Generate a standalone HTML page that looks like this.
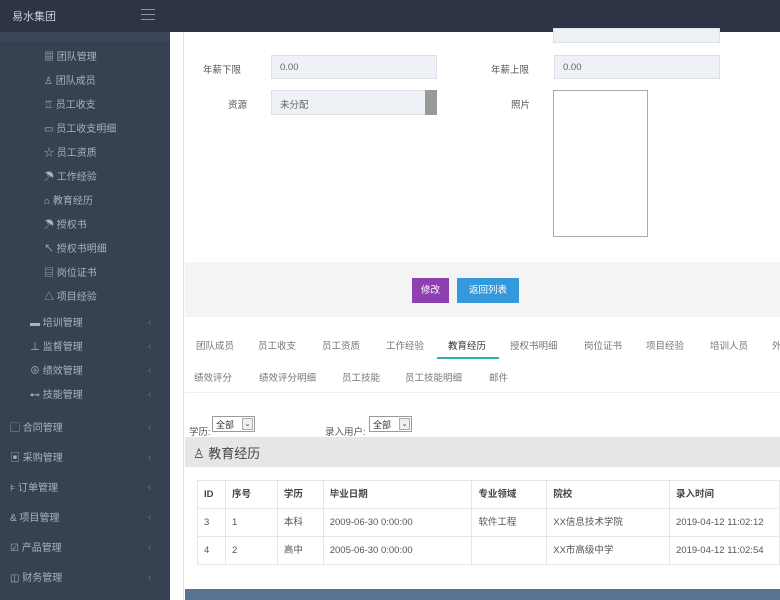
<!DOCTYPE html>
<html><head><meta charset="utf-8"><style>
*{margin:0;padding:0;box-sizing:border-box}
body{width:780px;height:600px;overflow:hidden;background:#fff;font-family:"Liberation Sans","Noto Sans CJK SC",sans-serif;font-size:10px;color:#555;position:relative}
.top{position:absolute;left:0;top:0;width:780px;height:32px;background:#2c3446}
.logo{position:absolute;left:12px;top:8px;color:#c8cdd6;font-size:11px}
.burger{position:absolute;left:141px;top:9px;width:14px}
.burger i{display:block;height:1px;background:#8a93a3;margin-bottom:4px}
.side{position:absolute;left:0;top:32px;width:170px;height:568px;background:#364152}
.side div{position:absolute;color:#a9b1bf;font-size:10px;white-space:nowrap}
.side .ar{left:148px;color:#6f7888;margin-top:3px}
.strip{position:absolute;left:170px;top:32px;width:14px;height:568px;background:#fff;border-right:1px solid #dfe3e8}
.lbl{position:absolute;font-size:9.5px;color:#555}
.inp{position:absolute;background:#eef1f5;border:1px solid #dde1e6;font-size:9.5px;color:#666;padding:6px 8px}
.btnbar{position:absolute;left:185px;top:262px;width:595px;height:55px;background:#f4f4f4}
.btn{position:absolute;top:16px;height:25px;color:#fff;font-size:9.5px;line-height:25px;text-align:center}
.tab{position:absolute;font-size:9.5px;color:#777;white-space:nowrap}
.sel{position:absolute;border:1px solid #999;background:#fff;height:16px;font-size:9px;padding:1px 3px;color:#333}
.sel span{position:absolute;right:1px;top:1px;width:11px;height:12px;border:1px solid #aaa;background:#eee;font-size:7px;text-align:center;line-height:11px}
table{position:absolute;left:197px;top:480px;border-collapse:collapse;font-size:9.5px;color:#555}
td{border:1px solid #e6e6e6;height:28px;line-height:26px;padding:0 6px;vertical-align:middle;white-space:nowrap}
tr:first-child td{font-weight:bold;color:#444}
</style></head><body>
<div class="top"><div class="logo">易水集团</div><div class="burger"><i></i><i></i><i></i></div></div>
<div class="side">
<div style="left:0;top:0;width:170px;height:10px;background:#3b4659"></div>
<div style="left:44px;top:16px">▦ 团队管理</div>
<div style="left:44px;top:40px">♙ 团队成员</div>
<div style="left:44px;top:64px">♖ 员工收支</div>
<div style="left:44px;top:88px">▭ 员工收支明细</div>
<div style="left:44px;top:112px">☆ 员工资质</div>
<div style="left:44px;top:136px">☂ 工作经验</div>
<div style="left:44px;top:160px">⌂ 教育经历</div>
<div style="left:44px;top:184px">☂ 授权书</div>
<div style="left:44px;top:208px">↖ 授权书明细</div>
<div style="left:44px;top:232px">▤ 岗位证书</div>
<div style="left:44px;top:256px">△ 项目经验</div>
<div style="left:30px;top:282px">▬ 培训管理</div><div class="ar" style="top:282px">‹</div>
<div style="left:30px;top:306px">⊥ 监督管理</div><div class="ar" style="top:306px">‹</div>
<div style="left:30px;top:330px">⊕ 绩效管理</div><div class="ar" style="top:330px">‹</div>
<div style="left:30px;top:354px">⊷ 技能管理</div><div class="ar" style="top:354px">‹</div>
<div style="left:10px;top:387px">▢ 合同管理</div><div class="ar" style="top:387px">‹</div>
<div style="left:10px;top:417px">▣ 采购管理</div><div class="ar" style="top:417px">‹</div>
<div style="left:10px;top:447px">⊧ 订单管理</div><div class="ar" style="top:447px">‹</div>
<div style="left:10px;top:477px">&amp; 项目管理</div><div class="ar" style="top:477px">‹</div>
<div style="left:10px;top:507px">☑ 产品管理</div><div class="ar" style="top:507px">‹</div>
<div style="left:10px;top:537px">◫ 财务管理</div><div class="ar" style="top:537px">‹</div>
</div>
<div class="strip"></div>
<div class="inp" style="left:553px;top:28px;width:167px;height:15px;padding:0"></div>
<div class="lbl" style="left:203px;top:62px">年薪下限</div>
<div class="inp" style="left:271px;top:55px;width:166px;height:24px">0.00</div>
<div class="lbl" style="left:491px;top:62px">年薪上限</div>
<div class="inp" style="left:554px;top:55px;width:166px;height:24px">0.00</div>
<div class="lbl" style="left:228px;top:97px">资源</div>
<div class="inp" style="left:271px;top:90px;width:166px;height:25px">未分配</div>
<div style="position:absolute;left:425px;top:90px;width:12px;height:25px;background:#999"></div>
<div class="lbl" style="left:511px;top:97px">照片</div>
<div style="position:absolute;left:553px;top:90px;width:95px;height:147px;border:1px solid #aaa;background:#fff"></div>
<div class="btnbar">
<div class="btn" style="left:227px;width:37px;background:#8e3fb0">修改</div>
<div class="btn" style="left:272px;width:62px;background:#3498db">返回列表</div>
</div>
<div class="tab" style="left:196px;top:338px">团队成员</div>
<div class="tab" style="left:258px;top:338px">员工收支</div>
<div class="tab" style="left:322px;top:338px">员工资质</div>
<div class="tab" style="left:386px;top:338px">工作经验</div>
<div class="tab" style="left:448px;top:338px;color:#333">教育经历</div>
<div style="position:absolute;left:437px;top:357px;width:62px;height:2px;background:#2ab0b0"></div>
<div class="tab" style="left:510px;top:338px">授权书明细</div>
<div class="tab" style="left:584px;top:338px">岗位证书</div>
<div class="tab" style="left:646px;top:338px">项目经验</div>
<div class="tab" style="left:710px;top:338px">培训人员</div>
<div class="tab" style="left:772px;top:338px">外</div>
<div class="tab" style="left:194px;top:370px">绩效评分</div>
<div class="tab" style="left:259px;top:370px">绩效评分明细</div>
<div class="tab" style="left:342px;top:370px">员工技能</div>
<div class="tab" style="left:405px;top:370px">员工技能明细</div>
<div class="tab" style="left:489px;top:370px">邮件</div>
<div style="position:absolute;left:185px;top:392px;width:595px;height:1px;background:#eee"></div>
<div class="lbl" style="left:189px;top:424px">学历:</div>
<div class="sel" style="left:212px;top:416px;width:43px">全部<span>⌄</span></div>
<div class="lbl" style="left:325px;top:424px">录入用户:</div>
<div class="sel" style="left:369px;top:416px;width:43px">全部<span>⌄</span></div>
<div style="position:absolute;left:185px;top:437px;width:595px;height:30px;background:#e6e6e6;font-size:13px;color:#444;padding:6px 8px">♙ 教育经历</div>
<table>
<tr><td style="width:28px">ID</td><td style="width:52px">序号</td><td style="width:46px">学历</td><td style="width:149px">毕业日期</td><td style="width:75px">专业领域</td><td style="width:123px">院校</td><td style="width:110px">录入时间</td></tr>
<tr><td>3</td><td>1</td><td>本科</td><td>2009-06-30 0:00:00</td><td>软件工程</td><td>XX信息技术学院</td><td>2019-04-12 11:02:12</td></tr>
<tr><td>4</td><td>2</td><td>高中</td><td>2005-06-30 0:00:00</td><td></td><td>XX市高级中学</td><td>2019-04-12 11:02:54</td></tr>
</table>
<div style="position:absolute;left:185px;top:589px;width:595px;height:11px;background:#5b7393"></div>
</body></html>
